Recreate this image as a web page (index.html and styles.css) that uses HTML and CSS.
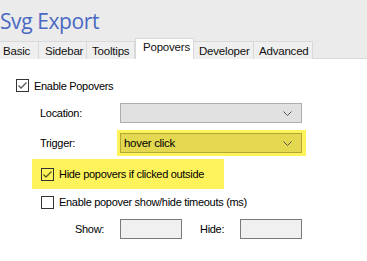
FILE: index.html
```html
<!DOCTYPE html>
<html lang="en">
  <head>
    <meta charset="UTF-8" />
    <title>Svg Export</title>
    <link rel="stylesheet" href="styles.css">
  </head>
  <body>
    <div class="header">
      <h1>Svg Export</h1>
      <div class="tabs">
        <span class="tab basic">Basic</span>
        <span class="tab sidebar">Sidebar</span>
        <span class="tab tooltips">Tooltips</span>
        <span class="tab active">Popovers</span>
        <span class="tab developer">Developer</span>
        <span class="tab advanced">Advanced</span>
      </div>
    </div>

    <div class="content">
      <label class="check-row first">
        <span class="box">
          <svg width="11" height="11" viewBox="0 0 11 11"><path d="M1.5 5.5 L4 8 L9.5 2.5" fill="none" stroke="#5a5a5a" stroke-width="1.3"/></svg>
        </span>
        Enable Popovers
      </label>

      <div class="field location">
        <span class="label">Location:</span>
        <div class="select">
          <span></span>
          <svg width="9" height="5" viewBox="0 0 9 5"><path d="M0.5 0.5 L4.5 4.5 L8.5 0.5" fill="none" stroke="#555" stroke-width="1"/></svg>
        </div>
      </div>

      <div class="field trigger">
        <span class="label">Trigger:</span>
        <div class="mark">
          <div class="select yellow">
            <span>hover click</span>
            <svg width="9" height="5" viewBox="0 0 9 5"><path d="M0.5 0.5 L4.5 4.5 L8.5 0.5" fill="none" stroke="#555" stroke-width="1"/></svg>
          </div>
        </div>
      </div>

      <label class="check-row hide">
        <span class="box">
          <svg width="11" height="11" viewBox="0 0 11 11"><path d="M1.5 5.5 L4 8 L9.5 2.5" fill="none" stroke="#5a5a1a" stroke-width="1.3"/></svg>
        </span>
        Hide popovers if clicked outside
      </label>

      <label class="check-row timeouts">
        <span class="box"></span>
        Enable popover show/hide timeouts (ms)
      </label>

      <div class="times">
        <span class="show-label">Show:</span>
        <span class="input"></span>
        <span class="hide-label">Hide:</span>
        <span class="input"></span>
      </div>
    </div>
  </body>
</html>
```

FILE: styles.css
```css
body {
  margin: 0;
  background-color: white;
  color: black;
  font-family: "Liberation Sans", Arial, sans-serif;
  font-size: 11px;
  letter-spacing: -0.3px;
}

.header {
  background-color: #ebebeb;
  height: 58px;
  display: flex;
  flex-direction: column;
  justify-content: space-between;
  border-bottom: 1px solid #dadada;
}

h1 {
  margin: 0;
  padding-top: 8px;
  font-family: "Open Sans", sans-serif;
  font-weight: normal;
  font-size: 21px;
  line-height: 26px;
  color: #4a69c2;
  letter-spacing: -0.4px;
}

.tabs {
  display: flex;
  align-items: flex-end;
  height: 20px;
}

.tab {
  box-sizing: border-box;
  height: 18px;
  line-height: 18px;
  padding-left: 3px;
  border-right: 1px solid #d9d9d9;
  border-top: 1px solid #d9d9d9;
  background-color: #efefef;
  font-size: 11.5px;
  letter-spacing: -0.2px;
  color: #111;
  margin-bottom: -1px;
}

.basic { width: 39px; }
.sidebar { width: 48px; padding-left: 6px; }
.tooltips { width: 48px; padding-left: 5px; }
.developer { width: 60px; padding-left: 5px; }
.advanced { width: 59px; padding-left: 5px; }

.tab.active {
  height: 21px;
  width: 59px;
  padding-left: 7px;
  line-height: 17px;
  background-color: white;
  border: 1px solid #d9d9d9;
  border-bottom: none;
}

.content {
  padding-left: 16px;
}

.check-row {
  display: flex;
  align-items: center;
  gap: 5px;
}

.box {
  box-sizing: border-box;
  flex: none;
  width: 13px;
  height: 13px;
  border: 1px solid #333;
  display: flex;
  align-items: center;
  justify-content: center;
}

.first {
  margin-top: 20px;
  height: 13px;
}

.field {
  display: flex;
  align-items: center;
  padding-left: 24px;
}

.label {
  width: 80px;
}

.location {
  margin-top: 11px;
}

.trigger {
  margin-top: 7px;
}

.select {
  box-sizing: border-box;
  width: 182px;
  height: 20px;
  border: 1px solid #adadad;
  background-color: #e1e1e1;
  display: flex;
  align-items: center;
  justify-content: space-between;
  padding: 0 9px 0 3px;
  font-size: 11.5px;
}

.mark {
  background-color: #fff35c;
  padding: 3px 4px 3px 3px;
  margin-left: -3px;
}

.select.yellow {
  background-color: #e3d850;
  border-color: #b2a838;
}

.hide {
  margin-top: 3px;
  margin-left: 16px;
  width: 192px;
  height: 30px;
  box-sizing: border-box;
  padding-left: 9px;
  background-color: #fff35c;
  white-space: nowrap;
}

.timeouts {
  margin-top: 7px;
  margin-left: 25px;
  height: 12px;
}

.times {
  display: flex;
  align-items: center;
  margin-top: 11px;
  padding-left: 59px;
}

.show-label { width: 45px; }
.hide-label { width: 40px; margin-left: 18px; }

.input {
  box-sizing: border-box;
  width: 62px;
  height: 20px;
  border: 1px solid #7a7a7a;
  background-color: #f0f0f0;
}
```
